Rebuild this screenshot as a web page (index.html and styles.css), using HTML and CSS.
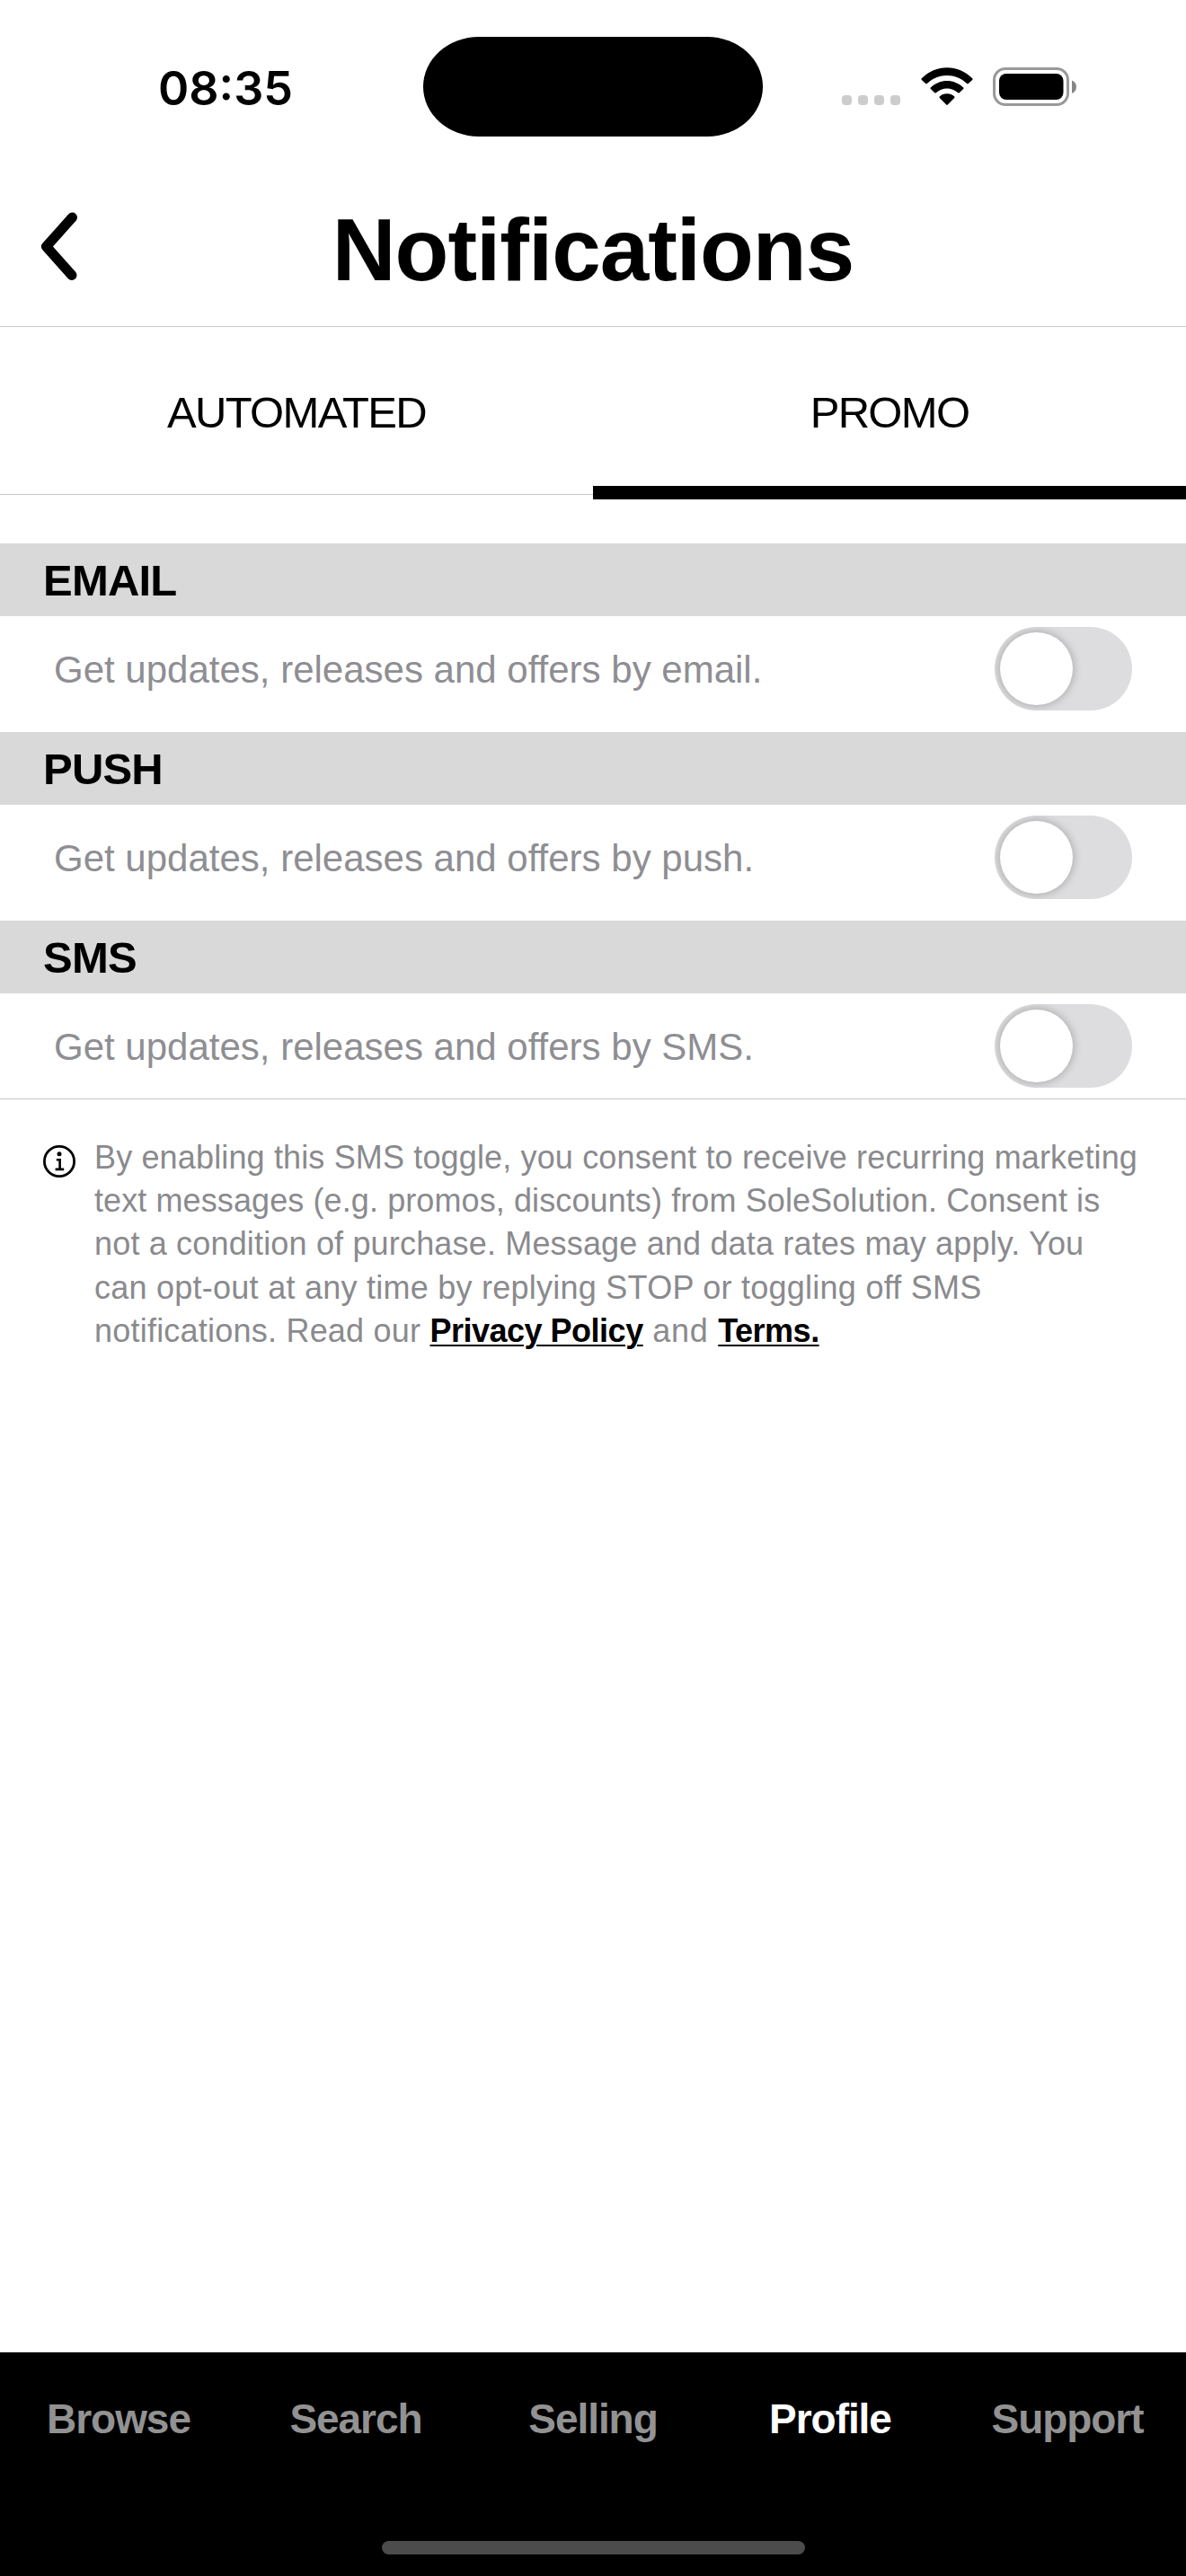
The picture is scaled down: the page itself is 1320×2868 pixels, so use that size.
FILE: index.html
```html
<!DOCTYPE html>
<html lang="en">
<head>
<meta charset="utf-8">
<title>Notifications</title>
<link rel="stylesheet" href="styles.css">
</head>
<body>
<div class="screen">
  <div class="status">
    <span class="time">08:35</span>
    <div class="island"></div>
    <div class="indicators">
      <div class="cell"><i></i><i></i><i></i><i></i></div>
      <svg class="wifi" width="58" height="43" viewBox="0 0 58 43">
        <path d="M0.8 12.2C16.5-3.7 41.5-3.7 57.2 12.2Q58 13.1 57.2 14L52.8 18.1Q52 18.8 51.2 18C38.5 6 19.5 6 6.8 18Q6 18.8 5.2 18.1L0.8 14Q0 13.1 0.8 12.2Z"/>
        <path d="M10.8 22.4C21 12.4 37 12.4 47.2 22.4Q48 23.2 47.2 24L42.7 28.3Q42 29 41.2 28.3C34.1 21.9 23.9 21.9 16.8 28.3Q16 29 15.3 28.3L10.8 24Q10 23.2 10.8 22.4Z"/>
        <path d="M20.8 32.4C25.2 28.2 32.8 28.2 37.2 32.4Q38 33.2 37.2 34L29.8 41.6Q29 42.4 28.2 41.6L20.8 34Q20 33.2 20.8 32.4Z"/>
      </svg>
      <svg class="battery" width="94" height="44" viewBox="0 0 94 44">
        <rect x="1.5" y="1.5" width="82" height="40" rx="12.5" fill="none" stroke="#999" stroke-width="3"/>
        <rect x="7" y="7" width="71.5" height="29" rx="8" fill="#000"/>
        <path d="M88 14.5C91.300 15.800 93 18.500 93 21.700S91.300 27.600 88 28.900Z" fill="#858585"/>
      </svg>
    </div>
  </div>

  <header class="header">
    <svg class="back" width="44" height="78" viewBox="0 0 44 78">
      <path d="M36.500 7L7.500 39.500L36 71.500" fill="none" stroke="#000" stroke-width="11" stroke-linecap="round" stroke-linejoin="round"/>
    </svg>
    <h1 class="title">Notifications</h1>
  </header>

  <nav class="tabs">
    <div class="tab">AUTOMATED</div>
    <div class="tab tab-active">PROMO</div>
  </nav>

  <main class="content">
    <h2 class="section">EMAIL</h2>
    <div class="row"><span class="label">Get updates, releases and offers by email.</span><span class="toggle"><span class="knob"></span></span></div>
    <h2 class="section">PUSH</h2>
    <div class="row"><span class="label">Get updates, releases and offers by push.</span><span class="toggle"><span class="knob"></span></span></div>
    <h2 class="section">SMS</h2>
    <div class="row row-last"><span class="label">Get updates, releases and offers by SMS.</span><span class="toggle"><span class="knob"></span></span></div>
    <div class="consent">
      <svg class="info" width="36" height="36" viewBox="0 0 36 36">
        <circle cx="18" cy="18" r="16.600" fill="none" stroke="#000" stroke-width="2.800"/>
        <circle cx="18" cy="9.800" r="2.500"/>
        <path d="M14.800 16.200H18.600V26.700M13.600 26.900H23.200" fill="none" stroke="#000" stroke-width="2.600"/>
      </svg>
      <p class="legal">
        <span class="line l1">By enabling this SMS toggle, you consent to receive recurring marketing</span>
        <span class="line l2">text messages (e.g. promos, discounts) from SoleSolution. Consent is</span>
        <span class="line l3">not a condition of purchase. Message and data rates may apply. You</span>
        <span class="line l4">can opt-out at any time by replying STOP or toggling off SMS</span>
        <span class="line l5">notifications. Read our <a class="link">Privacy Policy</a><span class="and"> and </span><a class="link">Terms.</a></span>
      </p>
    </div>
  </main>

  <footer class="bottom">
    <nav class="menu">
      <span class="item">Browse</span>
      <span class="item">Search</span>
      <span class="item">Selling</span>
      <span class="item item-active">Profile</span>
      <span class="item">Support</span>
    </nav>
    <div class="home"></div>
  </footer>
</div>
</body>
</html>
```

FILE: styles.css
```css
* { box-sizing: border-box; }
body { margin: 0; background: #fff; color: #000; font-family: "Liberation Sans", Arial, sans-serif; }
.screen { width: 1320px; height: 2868px; display: flex; flex-direction: column; overflow: hidden; }

.status { height: 196px; display: grid; grid-template-columns: 471px 378px 471px; flex: none; }
.time { font-family: Inter, sans-serif; font-weight: 600; font-size: 52px; line-height: 60px; padding: 69px 0 0 176px; }
.island { margin-top: 41px; height: 111px; background: #000; border-radius: 62px / 55.5px; }
.indicators { display: flex; align-items: flex-start; padding: 75px 0 0 88px; }
.cell { display: flex; gap: 7px; padding-top: 31px; width: 65px; margin-right: 23px; }
.cell i { width: 11px; height: 11px; border-radius: 4px; background: #ccc; flex: none; }
.wifi { margin-right: 22px; }

.header { height: 168px; padding: 0 44px; display: grid; grid-template-columns: 60px 1fr 60px; border-bottom: 1px solid #c6c6c8; flex: none; }
.back { margin-top: 39px; }
.title { margin: 26px 0 0; text-align: center; font-size: 98px; line-height: 112px; letter-spacing: -1px; }

.tabs { height: 192px; display: flex; flex: none; }
.tab { flex: 1; height: 187px; border-bottom: 1px solid #c6c6c8; text-align: center; font-size: 49px; line-height: 56px; padding-top: 67px; letter-spacing: -1.7px; }
.tab-active { height: 192px; border-bottom: 15px solid #000; }

.content { flex: 1; padding-top: 49px; }
.section { margin: 0; height: 81px; padding: 0 48px; background: #d9d9d9; font-size: 49px; line-height: 83px; letter-spacing: -0.8px; }
.row { height: 129px; padding: 12px 60px 0; display: flex; justify-content: space-between; }
.row-last { height: 118px; border-bottom: 1px solid #c6c6c8; }
.label { color: #8e8e93; font-size: 42px; line-height: 48px; padding-top: 24px; white-space: nowrap; }
.toggle { width: 153px; height: 93px; border-radius: 46.5px; background: #dddddf; padding: 6px; overflow: hidden; }
.knob { display: block; width: 81px; height: 81px; border-radius: 50%; background: #fff; box-shadow: 0 0 8px 2px rgba(0, 0, 0, .2); }

.consent { display: flex; padding: 41px 48px 0; gap: 21px; }
.info { flex: none; margin-top: 10px; }
.legal { margin: 0; color: #8a8a8e; font-size: 36px; line-height: 48.2px; }
.line { display: block; white-space: nowrap; }
.l1 { letter-spacing: 0.147px; }
.l2 { letter-spacing: 0.1px; }
.l3 { letter-spacing: 0.17px; }
.l4 { letter-spacing: 0.25px; }
.l5 { letter-spacing: 0.22px; }
.and { letter-spacing: 0.7px; }
.link { color: #000; font-weight: 700; letter-spacing: -0.5px; text-decoration: underline; text-decoration-thickness: 2px; text-underline-offset: 3px; }

.bottom { height: 249px; background: #000; flex: none; display: flex; flex-direction: column; align-items: center; }
.menu { width: 1320px; display: grid; grid-template-columns: repeat(5, 1fr); height: 210px; padding-top: 48px; }
.item { color: #929292; font-size: 46px; font-weight: 700; line-height: 52px; letter-spacing: -1.05px; text-align: center; }
.item-active { color: #fff; }
.home { width: 471px; height: 15px; border-radius: 7.5px; background: #4c4c4c; }
```
